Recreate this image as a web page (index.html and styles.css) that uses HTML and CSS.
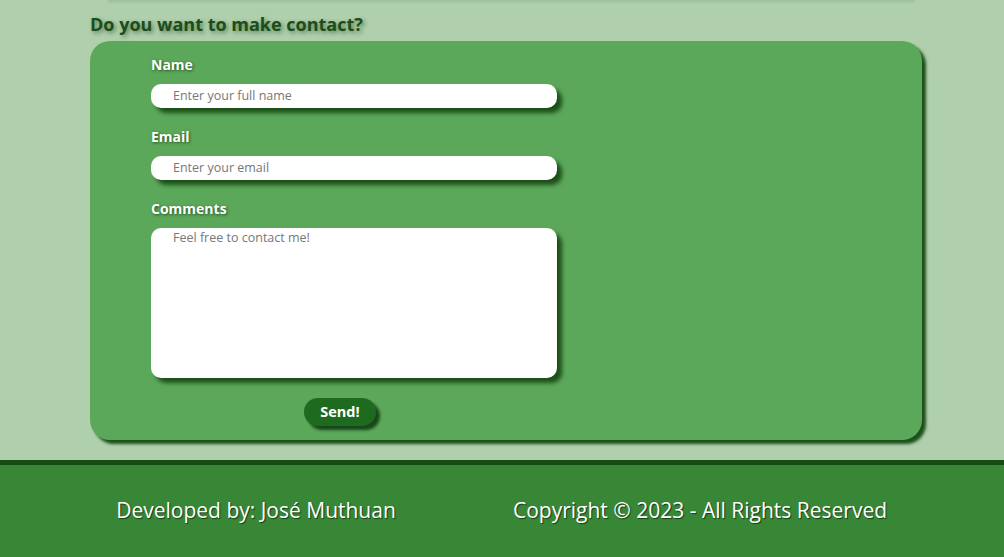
FILE: index.html
```html
<!DOCTYPE html>
<html lang="en">
<head>
<meta charset="utf-8">
<title>Contact</title>
<link rel="stylesheet" href="styles.css">
</head>
<body>
<div class="prev-edge"></div>
<main class="contact">
  <h2 class="contact-title">Do you want to make contact?</h2>
  <form class="contact-card">
    <label class="field-label" for="name">Name</label>
    <input class="field-input" id="name" type="text" placeholder="Enter your full name">
    <label class="field-label" for="email">Email</label>
    <input class="field-input" id="email" type="email" placeholder="Enter your email">
    <label class="field-label" for="comments">Comments</label>
    <textarea class="field-area" id="comments" placeholder="Feel free to contact me!"></textarea>
    <button class="send-btn" type="button">Send!</button>
  </form>
</main>
<footer class="site-footer">
  <p class="footer-item">Developed by: José Muthuan</p>
  <p class="footer-item">Copyright © 2023 - All Rights Reserved</p>
</footer>
</body>
</html>
```
FILE: styles.css
```css
html, body {
  margin: 0;
  padding: 0;
}
body {
  background: #afcfad;
  font-family: "Open Sans", "DejaVu Sans", sans-serif;
  height: 557px;
  overflow: hidden;
}
.prev-edge {
  margin: 0 90px 0 108px;
  height: 1px;
  background: #9fc29d;
  box-shadow: 0 1px 2px rgba(60, 110, 58, 0.25);
}
.contact {
  padding: 10px 82px 0 90px;
}
.contact-title {
  margin: 0 0 4px 0;
  font-size: 18px;
  line-height: 26px;
  font-weight: 700;
  color: #1c4d1a;
  text-shadow: 2px 2px 4px rgba(20, 70, 18, 0.55);
}
.contact-card {
  display: flex;
  flex-direction: column;
  align-items: flex-start;
  background: #5ca85a;
  border-radius: 20px;
  box-shadow: 4px 4px 3px #1d501b;
  padding: 14px 0 14px 61px;
}
.field-label {
  font-size: 14px;
  line-height: 20px;
  font-weight: 700;
  color: #ffffff;
  text-shadow: 1px 1px 3px rgba(20, 60, 18, 0.8);
  margin-bottom: 9px;
}
.field-input,
.field-area {
  box-sizing: border-box;
  width: 406px;
  border: none;
  outline: none;
  background: #ffffff;
  border-radius: 10px;
  box-shadow: 5px 5px 4px #1b4f19;
  font-family: "Open Sans", "DejaVu Sans", sans-serif;
  font-size: 12.5px;
  color: #333;
  padding: 0 0 0 22px;
  margin-bottom: 19px;
}
.field-input {
  height: 24px;
  padding-bottom: 2px;
}
.field-area {
  height: 150px;
  resize: none;
  padding-top: 1px;
  line-height: 17px;
  margin-bottom: 20px;
}
.field-input::placeholder,
.field-area::placeholder {
  color: #777;
}
.send-btn {
  margin-left: 153px;
  width: 72px;
  height: 28px;
  border: none;
  border-radius: 14px;
  background: #1e6a1e;
  color: #ffffff;
  font-family: "Open Sans", "DejaVu Sans", sans-serif;
  font-size: 14.5px;
  font-weight: 700;
  box-shadow: 4px 4px 3px #17471a;
  padding: 0 0 2px 0;
}
.site-footer {
  margin-top: 20px;
  border-top: 5px solid #144c12;
  background: #388736;
  height: 92px;
  display: grid;
  grid-template-columns: 512px 376px;
  align-items: center;
}
.footer-item {
  margin: 0;
  text-align: center;
  font-size: 21px;
  color: #ffffff;
  padding-bottom: 2px;
  text-shadow: 1px 1px 1px #173c15;
}
```
